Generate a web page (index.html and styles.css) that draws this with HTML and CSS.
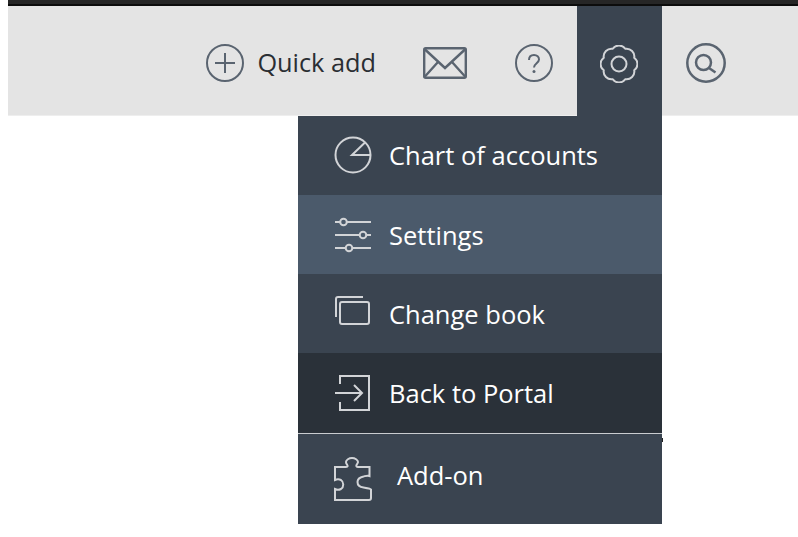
FILE: index.html
```html
<!DOCTYPE html>
<html lang="en">
<head>
<meta charset="utf-8">
<title>Settings menu</title>
<link rel="stylesheet" href="styles.css">
</head>
<body>
<div class="strip"></div>
<header class="bar">
  <a class="item quick"><svg class="ico" width="38" height="38" viewBox="0 0 38 38"><circle cx="19" cy="19" r="18"/><path d="M19 9v20M9 19h20"/></svg><span>Quick add</span></a>
  <a class="item mail"><svg class="ico mailico" width="44" height="32" viewBox="0 0 44 32"><rect x="1.200" y="1.200" width="41.600" height="29.600" rx="1.500"/><path d="M1.500 2 22 21 42.500 2M1.500 30 15 15M42.500 30 29 15"/></svg></a>
  <a class="item help"><svg class="ico" width="38" height="38" viewBox="0 0 38 38"><circle cx="19" cy="19" r="18"/><path d="M14 16c0-3 2-5 5-5s5 2 5 4.500c0 3.500-5 4-5 8"/><circle class="dot" cx="19" cy="27.500" r="1.500"/></svg></a>
  <a class="item gear"><svg class="ico light" width="38" height="38" viewBox="0 0 38 38"><path d="M34.240 12.690A7.800 7.800 0 0 1 34.240 25.310A7.800 7.800 0 0 1 25.310 34.240A7.800 7.800 0 0 1 12.690 34.240A7.800 7.800 0 0 1 3.760 25.310A7.800 7.800 0 0 1 3.760 12.690A7.800 7.800 0 0 1 12.690 3.760A7.800 7.800 0 0 1 25.310 3.760A7.800 7.800 0 0 1 34.240 12.690Z"/><circle cx="19" cy="19" r="7.500"/></svg></a>
  <a class="item search"><svg class="ico thick" width="40" height="40" viewBox="0 0 40 40"><circle cx="20" cy="20" r="18.700"/><circle cx="17.500" cy="19.500" r="7.500"/><path d="M23 25l6.500 4.500"/></svg></a>
</header>
<nav class="menu">
  <a class="row chart"><svg class="ico light" width="38" height="38" viewBox="0 0 38 38"><circle cx="19" cy="19" r="17.500"/><path d="M31 6.500 18 19h18"/></svg><span>Chart of accounts</span></a>
  <a class="row active"><svg class="ico light" width="38" height="38" viewBox="0 0 38 38"><path d="M1 6h5M13 6h24M1 19h24M33 19h4M1 32h10M19 32h18"/><circle cx="9.500" cy="6" r="3.300"/><circle cx="29" cy="19" r="3.300"/><circle cx="15" cy="32" r="3.300"/></svg><span>Settings</span></a>
  <a class="row"><svg class="ico light" width="38" height="38" viewBox="0 0 38 38"><path d="M2 22V4q0-2 2-2h25"/><path d="M8 7h25q2 0 2 2v18q0 2-2 2H8q-2 0-2-2V9q0-2 2-2Z"/></svg><span>Change book</span></a>
  <a class="row back"><svg class="ico light" width="38" height="38" viewBox="0 0 38 38"><path d="M6 10V2h29v34H6v-8"/><path d="M1 19h26M20 11l8 8-8 8"/></svg><span>Back to Portal</span></a>
  <a class="row addon"><svg class="ico light" width="40" height="44" viewBox="0 0 40 44"><path d="M1 43V32c2 1 4 1 6 0 3-2 3-7 0-9-2-1-4-1-6 0V10h11c2 0 2-1 1-2.500-1-1-1-2-1-2.500 0-2 3-4 6-4s6 2 6 4c0 1-1 2-1.500 3-.5 1 0 2 1.500 2h11.500v9c-2-1-4 0-6 .5-5 1-6 3-6 5.500 0 3 2 5 6 5.500 3 .5 7 1 7.500 2V41q0 2-2 2Z"/></svg><span>Add-on</span></a>
</nav>
</body>
</html>
```
FILE: styles.css
```css
html, body { margin: 0; background: #fff; }
body { padding-left: 8px; height: 537px; overflow: hidden; font-family: "Open Sans", "Noto Sans", sans-serif; }
.strip { height: 6px; background: linear-gradient(#262626 0 4px, #0c0c0c 4px); }
.bar { height: 109px; background: #e4e4e4; display: flex; justify-content: flex-end; padding-right: 48px; align-items: stretch; color: #2a2e33; box-shadow: 0 1px 0 #eee; }
.item { display: flex; align-items: center; justify-content: center; padding-top: 5px; box-sizing: border-box; }
.quick { width: 214px; justify-content: flex-end; padding-right: 23px; gap: 13px; font-size: 25.3px; }
.quick span { padding-bottom: 2px; }
.mail { width: 92px; }
.help { width: 86px; }
.gear { width: 85px; background: #3a4450; height: 110px; z-index: 1; padding-right: 2px; }
.search { width: 88px; }
.ico { fill: none; stroke: #5a6470; stroke-width: 2; flex: none; filter: blur(.35px); }
.ico.light { stroke: #d2d4d7; }
.ico.thick { stroke-width: 2.500; }
.ico.mailico { stroke-width: 2.400; }
.ico .dot { fill: #5a6470; stroke: none; }
.menu { width: 364px; margin: 1px 0 0 290px; background: #3a4450; color: #fff; font-size: 25.5px; display: flex; flex-direction: column; }
.row { height: 79px; display: flex; align-items: center; padding-left: 36px; gap: 17px; box-sizing: border-box; }
.row.chart { padding-bottom: 2px; }
.row.active { background: #4b5a6b; }
.row.back { background: #2a3139; height: 80px; position: relative; }
.row.addon { height: 91px; border-top: 1px solid #c9ccd0; gap: 23px; }
.row.addon span { padding-bottom: 8px; }
.row.back::after { content: ""; position: absolute; left: 364px; top: 85px; width: 1px; height: 4px; background: #222; }
```
